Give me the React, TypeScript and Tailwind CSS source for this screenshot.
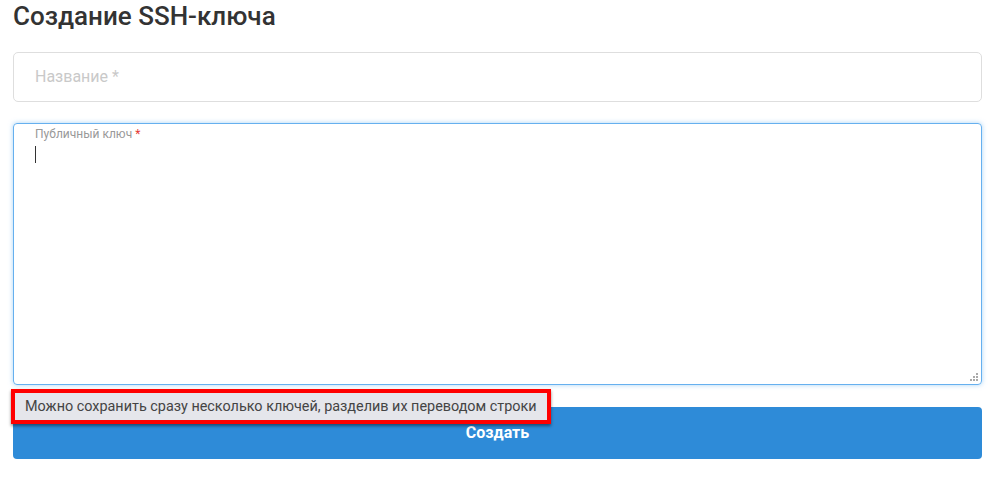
import React from "react";

export default function App() {
  return (
    <div className="relative w-[998px] h-[480px] bg-white" style={{ fontFamily: "Roboto, 'Noto Sans', sans-serif" }}>
      <div className="pl-[13px] pr-[16px] pt-[1px]">
        <h1 className="text-[26px] leading-[31px] font-medium text-[#333]">Создание SSH-ключа</h1>
        <div className="mt-[20px] h-[50px] w-[969px] rounded-[5px] border border-[#dedede] flex items-center pl-[21px]">
          <span className="text-[16px] text-[#c9c9c9]">Название *</span>
        </div>
        <div className="relative mt-[21px] h-[262px] w-[969px] rounded-[4px] border border-[#66b0ef] shadow-[0_0_5px_rgba(102,176,239,0.55)]">
          <div className="pl-[21px] pt-[3px] text-[12px] leading-[14px] text-[#999]">
            Публичный ключ <span className="text-[#e53935]">*</span>
          </div>
          <div className="ml-[21px] mt-[5px] w-px h-[17px] bg-[#333]" />
          <svg className="absolute right-[2px] bottom-[2px]" width="9" height="9" viewBox="0 0 9 9">
            <rect x="6" y="0" width="2" height="2" fill="#aaa" />
            <rect x="3" y="3" width="2" height="2" fill="#aaa" />
            <rect x="6" y="3" width="2" height="2" fill="#aaa" />
            <rect x="0" y="6" width="2" height="2" fill="#aaa" />
            <rect x="3" y="6" width="2" height="2" fill="#aaa" />
            <rect x="6" y="6" width="2" height="2" fill="#aaa" />
          </svg>
        </div>
        <button className="mt-[22px] h-[52px] w-[969px] rounded-[4px] bg-[#2e8bd8] text-white text-[16px] font-bold">
          Создать
        </button>
      </div>
      <div className="absolute left-[11px] top-[389px] w-[540px] h-[35px] border-[4px] border-[#ff0000] bg-[#e5e6eb] shadow-[0_2px_3px_rgba(0,0,0,0.45)] flex items-center pl-[10px]">
        <span className="text-[14.4px] text-[#444]">Можно сохранить сразу несколько ключей, разделив их переводом строки</span>
      </div>
    </div>
  );
}
